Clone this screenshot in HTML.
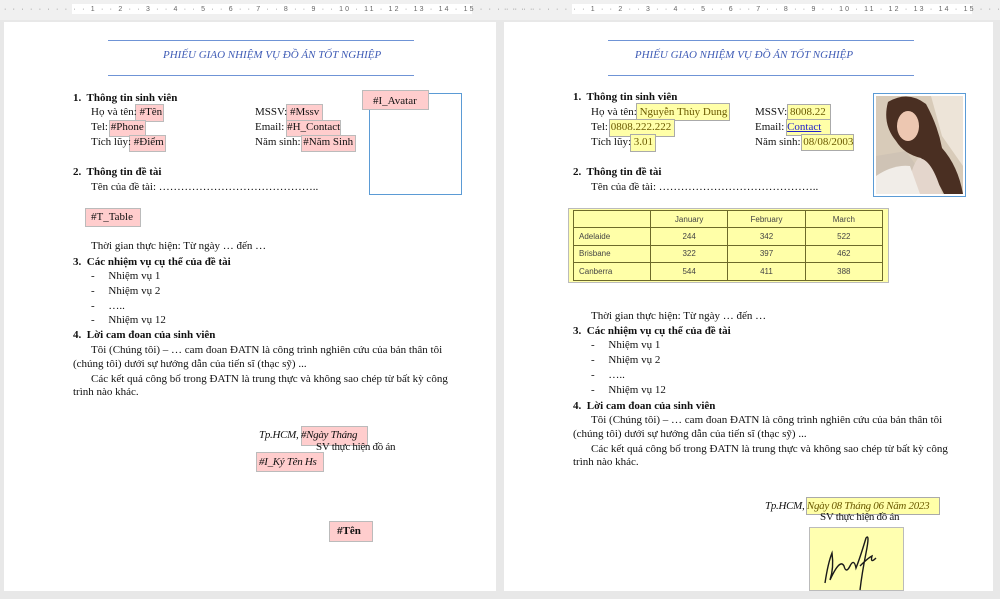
<!DOCTYPE html>
<html><head><meta charset="utf-8"><style>
*{margin:0;padding:0;box-sizing:border-box}
body{width:1000px;height:599px;background:#e8e8e8;position:relative;overflow:hidden;font-family:"Liberation Serif",serif;font-size:11px;color:#111}
.a{position:absolute;white-space:nowrap;line-height:14px}
.b{font-weight:bold}
.pk{position:absolute;background:#ffcdcd;border:1px solid #bbb}
.yl{position:absolute;background:#ffffa8;border:1px solid #aaa}
.ln{position:absolute;height:1px;background:#6f94d6}
.t{font-style:italic;color:#3e5bb5;font-size:11px}
td{border:1.5px solid #6d6a2a}
</style></head><body>
<div style="position:absolute;left:0;top:0;width:1000px;height:20px;background:#f0f0f0"></div>
<div style="position:absolute;left:72px;top:4px;width:400px;height:10px;background:#fff"></div>
<div style="position:absolute;left:572px;top:4px;width:400px;height:10px;background:#fff"></div>
<div class="a" style="left:4px;top:3px;font-size:7px;color:#666;font-family:'Liberation Sans',sans-serif;letter-spacing:2.2px">· · · · · · · · · · 1 · · 2 · · 3 · · 4 · · 5 · · 6 · · 7 · · 8 · · 9 · · 10 · 11 · 12 · 13 · 14 · 15 · · · · · · ·</div>
<div class="a" style="left:504px;top:3px;font-size:7px;color:#666;font-family:'Liberation Sans',sans-serif;letter-spacing:2.2px">· · · · · · · · · · 1 · · 2 · · 3 · · 4 · · 5 · · 6 · · 7 · · 8 · · 9 · · 10 · 11 · 12 · 13 · 14 · 15 · · · · · · ·</div>
<div style="position:absolute;left:4px;top:22px;width:492px;height:569px;background:#fff"></div>
<div style="position:absolute;left:504px;top:22px;width:489px;height:569px;background:#fff"></div>

<!-- LEFT PAGE -->
<div class="ln" style="left:108px;top:40px;width:306px"></div>
<div class="a t" style="left:163px;top:48px;width:214px;text-align:center">PHIẾU GIAO NHIỆM VỤ ĐỒ ÁN TỐT NGHIỆP</div>
<div class="ln" style="left:108px;top:75px;width:306px"></div>
<div class="a b" style="left:73px;top:91px">1.&nbsp; Thông tin sinh viên</div>
<div class="pk" style="left:135px;top:104px;width:29px;height:18px"></div>
<div class="a" style="left:91px;top:105px">Họ và tên: #Tên</div>
<div class="pk" style="left:286px;top:104px;width:37px;height:18px"></div>
<div class="a" style="left:255px;top:105px">MSSV: #Mssv</div>
<div class="pk" style="left:109px;top:120px;width:37px;height:17px"></div>
<div class="a" style="left:91px;top:120px">Tel: #Phone</div>
<div class="pk" style="left:286px;top:120px;width:55px;height:17px"></div>
<div class="a" style="left:255px;top:120px">Email: #H_Contact</div>
<div class="pk" style="left:129px;top:135px;width:37px;height:17px"></div>
<div class="a" style="left:91px;top:135px">Tích lũy: #Điểm</div>
<div class="pk" style="left:301px;top:135px;width:55px;height:17px"></div>
<div class="a" style="left:255px;top:135px">Năm sinh: #Năm Sinh</div>
<div style="position:absolute;left:369px;top:93px;width:93px;height:102px;border:1px solid #5b9bd5"></div>
<div class="pk" style="left:362px;top:90px;width:67px;height:20px"></div>
<div class="a" style="left:373px;top:94px">#I_Avatar</div>
<div class="a b" style="left:73px;top:165px">2.&nbsp; Thông tin đề tài</div>
<div class="a" style="left:91px;top:180px">Tên của đề tài: ……………………………………..</div>
<div class="pk" style="left:85px;top:208px;width:56px;height:19px"></div>
<div class="a" style="left:91px;top:210px">#T_Table</div>
<div class="a" style="left:91px;top:239px">Thời gian thực hiện: Từ ngày … đến …</div>
<div class="a b" style="left:73px;top:255px">3.&nbsp; Các nhiệm vụ cụ thể của đề tài</div>
<div class="a" style="left:91px;top:269px">-&nbsp;&nbsp;&nbsp;&nbsp; Nhiệm vụ 1</div>
<div class="a" style="left:91px;top:284px">-&nbsp;&nbsp;&nbsp;&nbsp; Nhiệm vụ 2</div>
<div class="a" style="left:91px;top:299px">-&nbsp;&nbsp;&nbsp;&nbsp; …..</div>
<div class="a" style="left:91px;top:313px">-&nbsp;&nbsp;&nbsp;&nbsp; Nhiệm vụ 12</div>
<div class="a b" style="left:73px;top:328px">4.&nbsp; Lời cam đoan của sinh viên</div>
<div class="a" style="left:91px;top:343px">Tôi (Chúng tôi) – … cam đoan ĐATN là công trình nghiên cứu của bản thân tôi</div>
<div class="a" style="left:73px;top:357px">(chúng tôi) dưới sự hướng dẫn của tiến sĩ (thạc sỹ) ...</div>
<div class="a" style="left:91px;top:372px">Các kết quả công bố trong ĐATN là trung thực và không sao chép từ bất kỳ công</div>
<div class="a" style="left:73px;top:385px">trình nào khác.</div>
<div class="pk" style="left:301px;top:426px;width:67px;height:20px"></div>
<div class="a" style="left:259px;top:428px;font-style:italic;letter-spacing:-.3px">Tp.HCM, #Ngày Tháng</div>
<div class="a" style="left:316px;top:440px;letter-spacing:-.3px">SV thực hiện đồ án</div>
<div class="pk" style="left:256px;top:452px;width:68px;height:20px"></div>
<div class="a" style="left:259px;top:455px;font-style:italic;letter-spacing:-.3px">#I_Ký Tên Hs</div>
<div class="pk" style="left:329px;top:521px;width:44px;height:21px"></div>
<div class="a b" style="left:337px;top:524px">#Tên</div>

<!-- RIGHT PAGE -->
<div class="ln" style="left:608px;top:40px;width:306px"></div>
<div class="a t" style="left:610px;top:48px;width:268px;text-align:center">PHIẾU GIAO NHIỆM VỤ ĐỒ ÁN TỐT NGHIỆP</div>
<div class="ln" style="left:608px;top:75px;width:306px"></div>
<div class="a b" style="left:573px;top:90px">1.&nbsp; Thông tin sinh viên</div>
<div class="yl" style="left:636px;top:103px;width:94px;height:18px"></div>
<div class="a" style="left:591px;top:105px">Họ và tên: <span style="color:#6b5a00">Nguyễn Thùy Dung</span></div>
<div class="yl" style="left:787px;top:104px;width:44px;height:17px"></div>
<div class="a" style="left:755px;top:105px">MSSV: <span style="color:#6b5a00">8008.22</span></div>
<div class="yl" style="left:609px;top:119px;width:66px;height:18px"></div>
<div class="a" style="left:591px;top:120px">Tel: <span style="color:#6b5a00">0808.222.222</span></div>
<div class="yl" style="left:786px;top:119px;width:45px;height:17px"></div>
<div class="a" style="left:755px;top:120px">Email: <span style="color:#22c;text-decoration:underline">Contact</span></div>
<div class="yl" style="left:630px;top:134px;width:26px;height:18px"></div>
<div class="a" style="left:591px;top:135px">Tích lũy: <span style="color:#6b5a00">3.01</span></div>
<div class="yl" style="left:801px;top:134px;width:53px;height:17px"></div>
<div class="a" style="left:755px;top:135px">Năm sinh: <span style="color:#6b5a00">08/08/2003</span></div>
<div style="position:absolute;left:873px;top:93px;width:93px;height:104px;border:1px solid #5b9bd5;background:#fff;padding:2px">
<svg width="87" height="98" viewBox="0 0 87 98">
<rect width="87" height="98" fill="#d8cbb9"/>
<path d="M55 0 L87 0 L87 70 L66 40 Z" fill="#ede4d8"/>
<path d="M0 60 L30 55 L60 98 L0 98 Z" fill="#cfc3b5"/>
<path d="M12 6 Q32 -6 50 8 Q62 30 66 52 Q82 70 87 98 L68 98 Q55 72 45 62 Q28 58 20 45 Q6 28 12 6 Z" fill="#4a2f22"/>
<ellipse cx="32" cy="30" rx="11" ry="15" fill="#edc7b1"/>
<path d="M42 62 Q56 62 66 98 L38 98 Q30 80 42 62Z" fill="#e4d6cc"/>
<path d="M0 80 Q18 68 34 70 L44 98 L0 98Z" fill="#f1ede8"/>
</svg></div>
<div class="a b" style="left:573px;top:165px">2.&nbsp; Thông tin đề tài</div>
<div class="a" style="left:591px;top:180px">Tên của đề tài: ……………………………………..</div>
<div style="position:absolute;left:568px;top:208px;width:321px;height:75px;background:#ffffa8;border:1px solid #bbb"></div>
<table style="position:absolute;left:573px;top:210px;width:310px;height:71px;border-collapse:collapse;table-layout:fixed;font-family:'Liberation Sans',sans-serif;font-size:8px;color:#444">
<tr style="height:17px"><td style="width:77px"></td><td style="text-align:center">January</td><td style="text-align:center">February</td><td style="text-align:center">March</td></tr>
<tr><td style="padding-left:5px">Adelaide</td><td style="text-align:center">244</td><td style="text-align:center">342</td><td style="text-align:center">522</td></tr>
<tr><td style="padding-left:5px">Brisbane</td><td style="text-align:center">322</td><td style="text-align:center">397</td><td style="text-align:center">462</td></tr>
<tr><td style="padding-left:5px">Canberra</td><td style="text-align:center">544</td><td style="text-align:center">411</td><td style="text-align:center">388</td></tr>
</table>
<div class="a" style="left:591px;top:309px">Thời gian thực hiện: Từ ngày … đến …</div>
<div class="a b" style="left:573px;top:324px">3.&nbsp; Các nhiệm vụ cụ thể của đề tài</div>
<div class="a" style="left:591px;top:338px">-&nbsp;&nbsp;&nbsp;&nbsp; Nhiệm vụ 1</div>
<div class="a" style="left:591px;top:353px">-&nbsp;&nbsp;&nbsp;&nbsp; Nhiệm vụ 2</div>
<div class="a" style="left:591px;top:368px">-&nbsp;&nbsp;&nbsp;&nbsp; …..</div>
<div class="a" style="left:591px;top:383px">-&nbsp;&nbsp;&nbsp;&nbsp; Nhiệm vụ 12</div>
<div class="a b" style="left:573px;top:399px">4.&nbsp; Lời cam đoan của sinh viên</div>
<div class="a" style="left:591px;top:413px">Tôi (Chúng tôi) – … cam đoan ĐATN là công trình nghiên cứu của bản thân tôi</div>
<div class="a" style="left:573px;top:427px">(chúng tôi) dưới sự hướng dẫn của tiến sĩ (thạc sỹ) ...</div>
<div class="a" style="left:591px;top:442px">Các kết quả công bố trong ĐATN là trung thực và không sao chép từ bất kỳ công</div>
<div class="a" style="left:573px;top:455px">trình nào khác.</div>
<div class="yl" style="left:806px;top:497px;width:134px;height:18px"></div>
<div class="a" style="left:765px;top:499px;font-style:italic;letter-spacing:-.3px">Tp.HCM, <span style="color:#6b5a00">Ngày 08 Tháng 06 Năm 2023</span></div>
<div class="a" style="left:820px;top:510px;letter-spacing:-.3px">SV thực hiện đồ án</div>
<div style="position:absolute;left:809px;top:527px;width:95px;height:64px;background:#ffffb0;border:1px solid #bbb">
<svg width="95" height="64" viewBox="0 0 95 64"><path d="M15 55 Q18 35 22 25 Q24 40 20 52 Q30 30 34 38 Q36 46 40 38 Q44 30 46 40 Q50 30 56 10 Q60 5 56 25 Q52 45 50 62 M50 38 Q58 30 62 28 Q60 36 66 30" fill="none" stroke="#1a1a1a" stroke-width="1.4"/></svg></div>
</body></html>
